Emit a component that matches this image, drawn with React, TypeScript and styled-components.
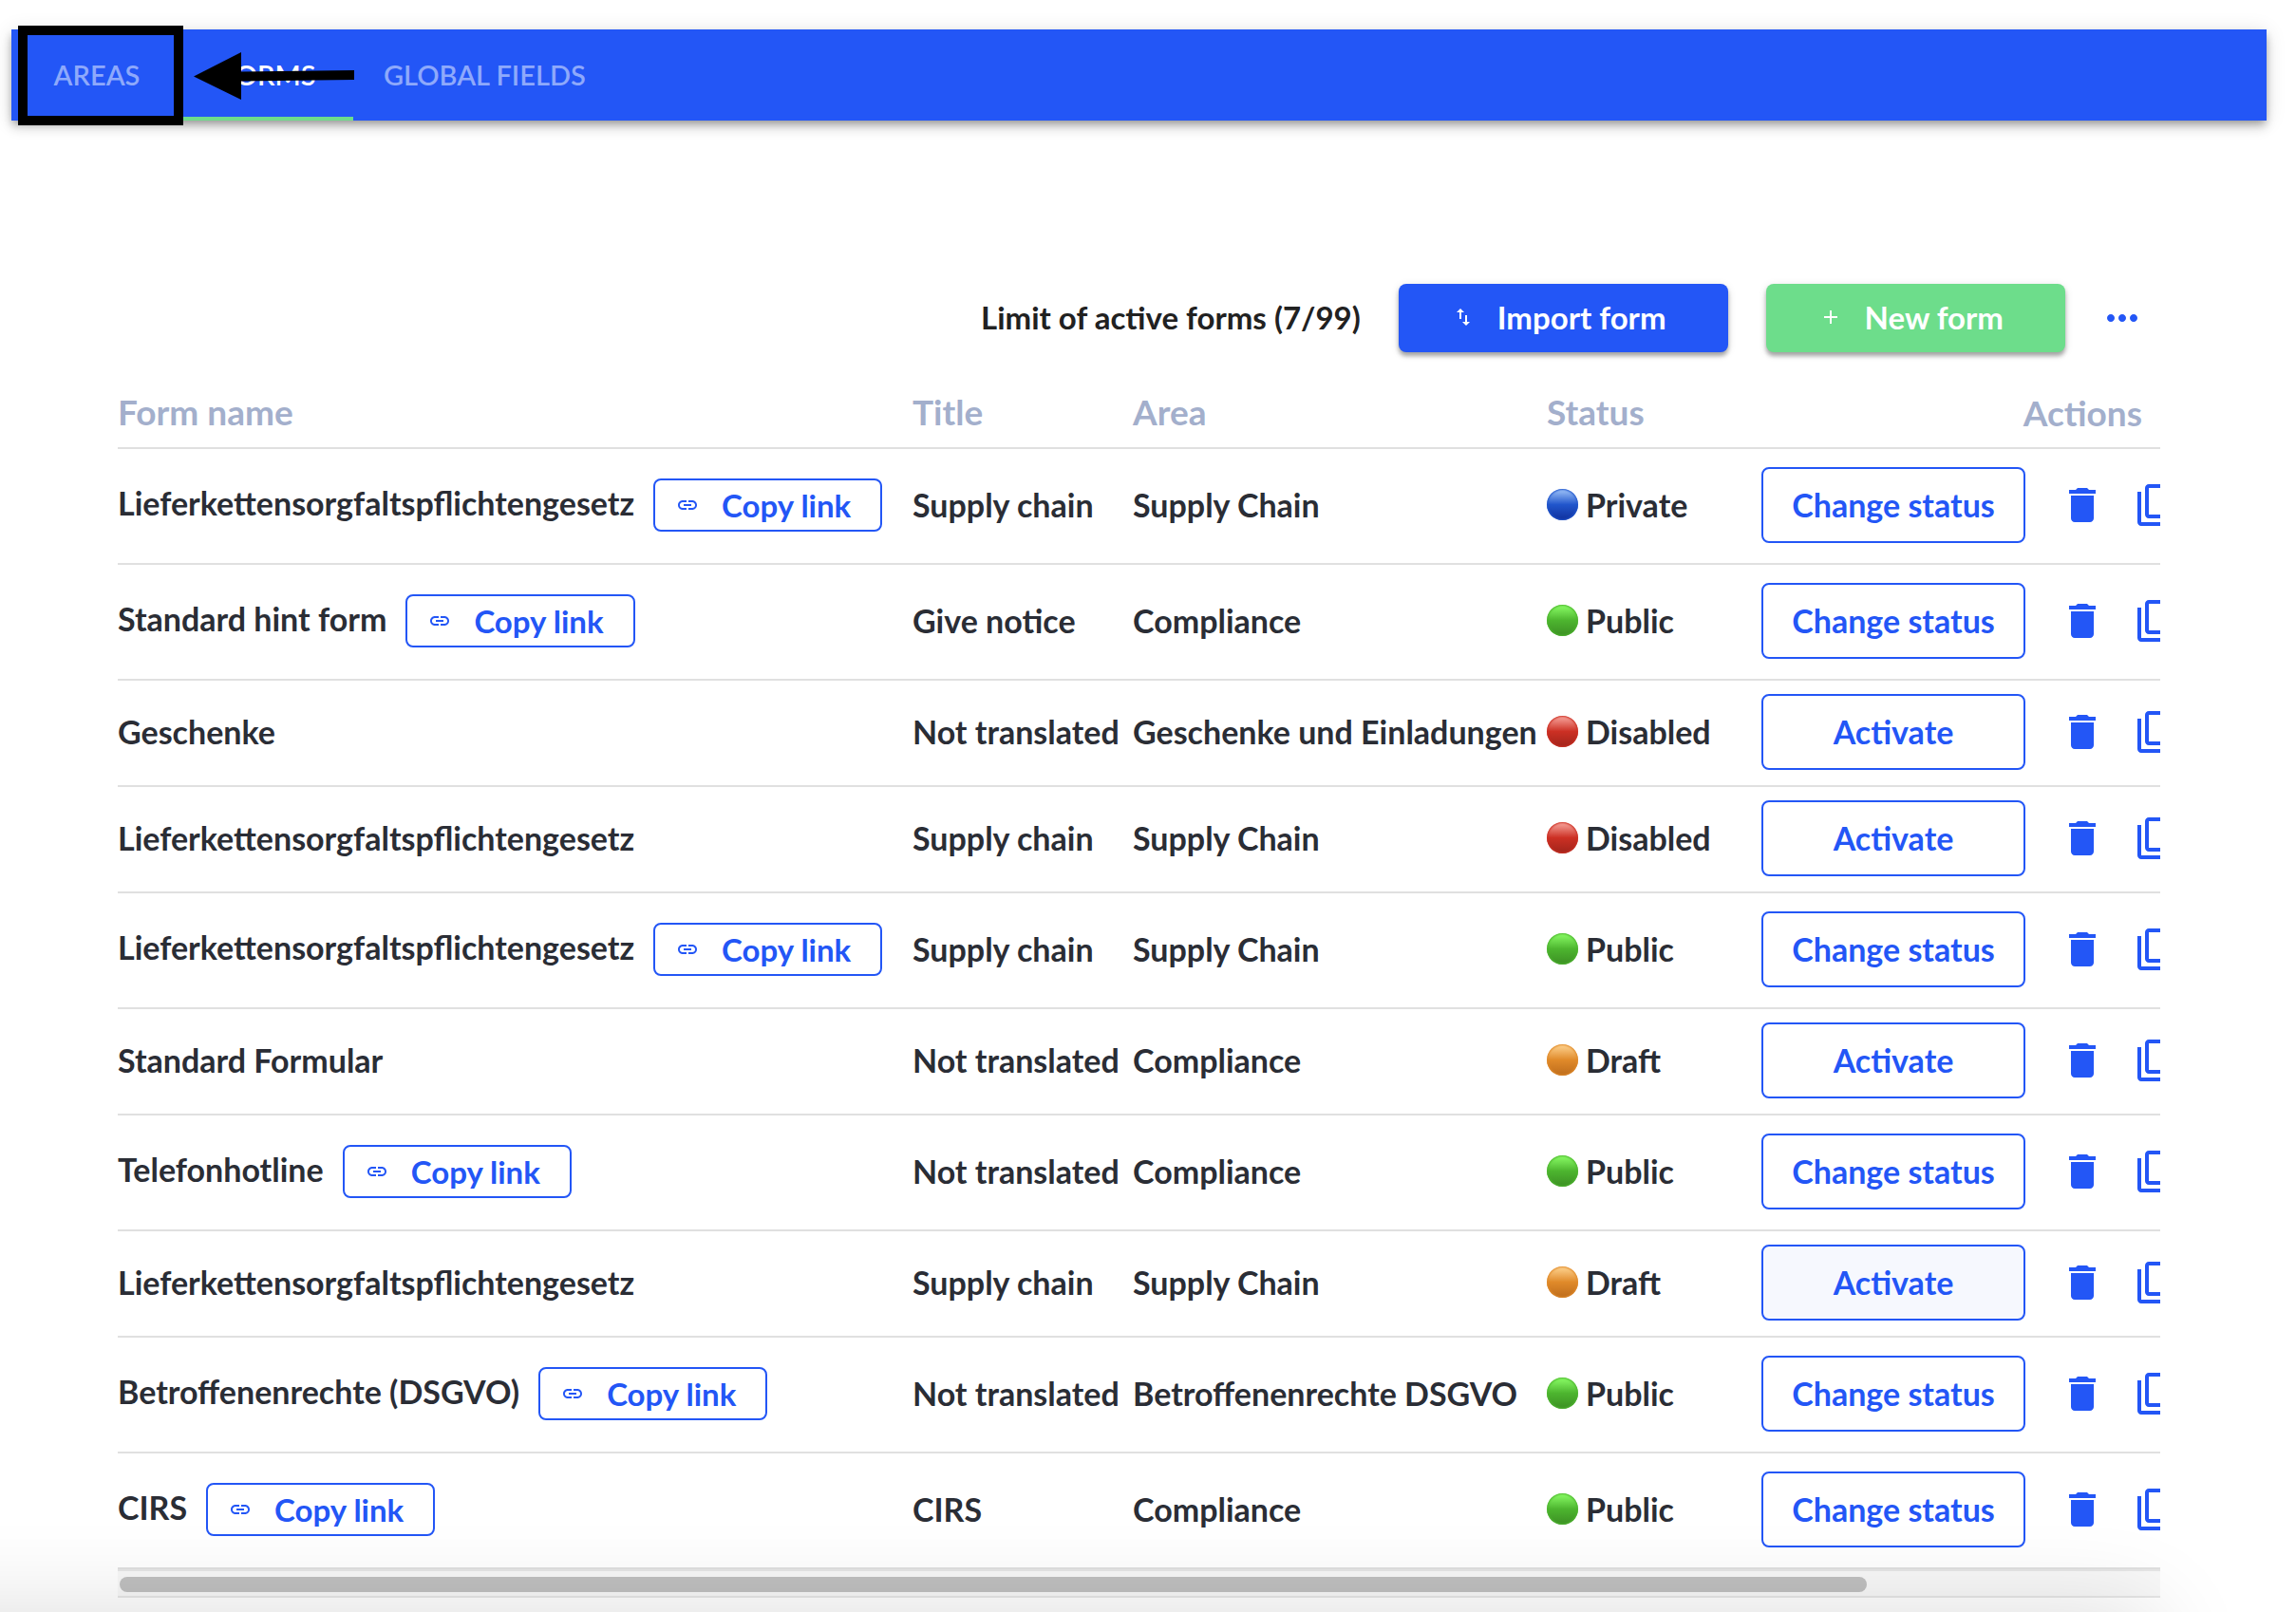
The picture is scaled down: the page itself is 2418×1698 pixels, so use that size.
import React from "react";
import styled, { createGlobalStyle } from "styled-components";
import {
  MdAdd,
  MdDelete,
  MdFilterNone,
  MdImportExport,
  MdLink,
  MdMoreHoriz,
} from "react-icons/md";

const blue = "#2356f6";
const green = "#6ddd8b";

const GlobalStyle = createGlobalStyle`
  * { box-sizing: border-box; }
  body {
    margin: 0;
    background: #fff;
    color: #2a2d35;
    font-family: Lato, "Noto Sans", sans-serif;
    font-size: 33px;
    line-height: 40px;
    font-weight: 700;
  }
  button { font: inherit; cursor: pointer; }
`;

const Page = styled.div`
  position: relative;
  min-height: 100vh;
  padding: 31px 31px 0 12px;
  overflow: hidden;

  /* soft shade rising from the bottom edge of the view */
  &::after {
    content: "";
    position: absolute;
    top: 100%;
    left: -120px;
    right: 150px;
    height: 120px;
    box-shadow: 0 0 100px rgba(0, 0, 0, 0.14);
    pointer-events: none;
  }
`;

const TabBar = styled.nav`
  display: flex;
  height: 96px;
  background: ${blue};
  box-shadow: 0 4px 8px -2px rgba(0, 0, 0, 0.3), 0 8px 10px rgba(0, 0, 0, 0.12),
    0 2px 20px rgba(0, 0, 0, 0.12);
`;

const Tab = styled.a<{ $active?: boolean }>`
  position: relative;
  display: flex;
  align-items: center;
  justify-content: center;
  min-width: 180px;
  padding: 0 32px;
  border-bottom: 4px solid ${(p) => (p.$active ? green : "transparent")};
  border-top: 4px solid transparent;
  color: ${(p) => (p.$active ? "#fff" : "#8ea9fb")};
  font-size: 29px;
  font-weight: 600;
  text-decoration: none;
  text-transform: uppercase;
`;

const Highlight = styled.span`
  position: absolute;
  top: -8px;
  bottom: -9px;
  left: 7px;
  right: -1px;
  border: 10px solid #000;
  z-index: 1;
`;

const Arrow = styled.svg`
  position: absolute;
  left: 12px;
  top: 19px;
  width: 170px;
  height: 52px;
`;

const Content = styled.main`
  padding: 172px 112px 0 112px;
`;

const Toolbar = styled.div`
  display: flex;
  align-items: center;
  justify-content: flex-end;
  gap: 40px;
  height: 72px;
  padding-right: 16px;
  color: #212121;
`;

const ToolLabel = styled.span`
  padding-bottom: 2px;
`;

const ToolButton = styled.button<{ $color: string }>`
  display: flex;
  align-items: center;
  gap: 24px;
  height: 72px;
  padding: 0 65px 2px 56px;
  border: 0;
  border-radius: 8px;
  background: ${(p) => p.$color};
  color: #fff;
  box-shadow: 0 4px 4px rgba(0, 0, 0, 0.3), 0 2px 10px rgba(0, 0, 0, 0.12);
`;

const IconButton = styled.button`
  display: flex;
  flex: none;
  padding: 0;
  border: 0;
  background: none;
  color: ${blue};
`;

const MoreButton = styled(IconButton)`
  margin-left: -4px;
`;

const TableScroll = styled.div`
  overflow: hidden;
`;

const Table = styled.table`
  width: 100%;
  table-layout: fixed;
  border-collapse: separate;
  border-spacing: 0;
  white-space: nowrap;
`;

const Col = styled.col<{ $width?: number }>`
  width: ${(p) => (p.$width ? `${p.$width}px` : "auto")};
`;

const HeadCell = styled.th<{ $end?: boolean }>`
  height: 102px;
  padding: ${(p) => (p.$end ? "28px 19px 0 0" : "25px 0 0")};
  border-bottom: 2px solid #e0e0e0;
  color: #a3afcc;
  font-size: 37px;
  text-align: ${(p) => (p.$end ? "right" : "left")};
`;

const Row = styled.tr<{ $tall: boolean }>`
  height: ${(p) => (p.$tall ? 122 : 112)}px;
`;

const Cell = styled.td`
  padding: 0 0 2px;
  border-bottom: 2px solid #e0e0e0;
  font-size: 34px;
`;

const Line = styled.div<{ $gap: number }>`
  display: flex;
  align-items: center;
  gap: ${(p) => p.$gap}px;
`;

const Name = styled.span<{ $raised: boolean }>`
  padding-bottom: ${(p) => (p.$raised ? 4 : 0)}px;
`;

const Outlined = styled.button<{ $filled?: boolean }>`
  flex: none;
  width: 278px;
  height: 80px;
  margin-right: 4px;
  border: 2px solid ${blue};
  border-radius: 8px;
  background: ${(p) => (p.$filled ? "#f6f8fe" : "#fff")};
  color: ${blue};
`;

const CopyButton = styled.button`
  display: flex;
  align-items: center;
  gap: 24px;
  height: 56px;
  padding: 0 31px 0 22px;
  border: 2px solid ${blue};
  border-radius: 8px;
  background: #fff;
  color: ${blue};
  font-size: 33px;
`;

const Ball = styled.span<{ $top: string; $mid: string; $low: string }>`
  width: 33px;
  height: 33px;
  margin-bottom: 2px;
  border-radius: 50%;
  background: linear-gradient(${(p) => `${p.$top}, ${p.$mid} 50%, ${p.$low}`});
  box-shadow: inset 0 0 2px 1px ${(p) => p.$mid};
`;

const ScrollTrack = styled.div`
  height: 30px;
  padding: 6px 2px 0;
  border: 2px solid #e6e6e6;
  border-width: 2px 0;
  background: #f8f8f8;
`;

const ScrollThumb = styled.div`
  width: 85.7%;
  height: 16px;
  border-radius: 8px;
  background: #c0c0c0;
`;

type Status = "Private" | "Public" | "Disabled" | "Draft";

const balls: Record<Status, [string, string, string]> = {
  Private: ["#a4c8fa", "#2156cc", "#0f2f9c"],
  Public: ["#8cff68", "#4db52f", "#3c8f24"],
  Disabled: ["#f9aaa2", "#cc3024", "#a0241b"],
  Draft: ["#ffd694", "#e08a2a", "#bd6c1c"],
};

const forms: { name: string; title: string; area: string; status: Status; hovered?: boolean }[] = [
  { name: "Lieferkettensorgfaltspflichtengesetz", title: "Supply chain", area: "Supply Chain", status: "Private" },
  { name: "Standard hint form", title: "Give notice", area: "Compliance", status: "Public" },
  { name: "Geschenke", title: "Not translated", area: "Geschenke und Einladungen", status: "Disabled" },
  { name: "Lieferkettensorgfaltspflichtengesetz", title: "Supply chain", area: "Supply Chain", status: "Disabled" },
  { name: "Lieferkettensorgfaltspflichtengesetz", title: "Supply chain", area: "Supply Chain", status: "Public" },
  { name: "Standard Formular", title: "Not translated", area: "Compliance", status: "Draft" },
  { name: "Telefonhotline", title: "Not translated", area: "Compliance", status: "Public" },
  { name: "Lieferkettensorgfaltspflichtengesetz", title: "Supply chain", area: "Supply Chain", status: "Draft", hovered: true },
  { name: "Betroffenenrechte (DSGVO)", title: "Not translated", area: "Betroffenenrechte DSGVO", status: "Public" },
  { name: "CIRS", title: "CIRS", area: "Compliance", status: "Public" },
];

export default function App() {
  return (
    <Page>
      <GlobalStyle />
      <TabBar>
        <Tab href="#areas">
          Areas
          <Highlight />
        </Tab>
        <Tab href="#forms" $active>
          Forms
          <Arrow viewBox="0 0 170 52" aria-hidden="true">
            <path d="M0 26.500 50 1v20.500L169 20v10L50 31.500V51z" />
          </Arrow>
        </Tab>
        <Tab href="#global-fields">Global fields</Tab>
      </TabBar>
      <Content>
        <Toolbar>
          <ToolLabel>Limit of active forms (7/99)</ToolLabel>
          <ToolButton $color={blue}>
            <MdImportExport size={24} />
            Import form
          </ToolButton>
          <ToolButton $color={green}>
            <MdAdd size={24} />
            New form
          </ToolButton>
          <MoreButton aria-label="More">
            <MdMoreHoriz size={48} />
          </MoreButton>
        </Toolbar>
        <TableScroll>
          <Table>
            <colgroup>
              <Col />
              <Col $width={232} />
              <Col $width={436} />
              <Col $width={226} />
              <Col $width={420} />
            </colgroup>
            <thead>
              <tr>
                <HeadCell>Form name</HeadCell>
                <HeadCell>Title</HeadCell>
                <HeadCell>Area</HeadCell>
                <HeadCell>Status</HeadCell>
                <HeadCell $end>Actions</HeadCell>
              </tr>
            </thead>
            <tbody>
              {forms.map((form, i) => {
                const live = form.status === "Public" || form.status === "Private";
                const [top, mid, low] = balls[form.status];
                return (
                  <Row key={i} $tall={live}>
                    <Cell>
                      <Line $gap={20}>
                        <Name $raised={live}>{form.name}</Name>
                        {live && (
                          <CopyButton>
                            <MdLink size={24} />
                            Copy link
                          </CopyButton>
                        )}
                      </Line>
                    </Cell>
                    <Cell>{form.title}</Cell>
                    <Cell>{form.area}</Cell>
                    <Cell>
                      <Line $gap={8}>
                        <Ball $top={top} $mid={mid} $low={low} />
                        {form.status}
                      </Line>
                    </Cell>
                    <Cell>
                      <Line $gap={32}>
                        <Outlined $filled={form.hovered}>
                          {live ? "Change status" : "Activate"}
                        </Outlined>
                        <IconButton aria-label="Delete">
                          <MdDelete size={48} />
                        </IconButton>
                        <IconButton aria-label="Duplicate">
                          <MdFilterNone size={48} />
                        </IconButton>
                      </Line>
                    </Cell>
                  </Row>
                );
              })}
            </tbody>
          </Table>
        </TableScroll>
        <ScrollTrack>
          <ScrollThumb />
        </ScrollTrack>
      </Content>
    </Page>
  );
}
